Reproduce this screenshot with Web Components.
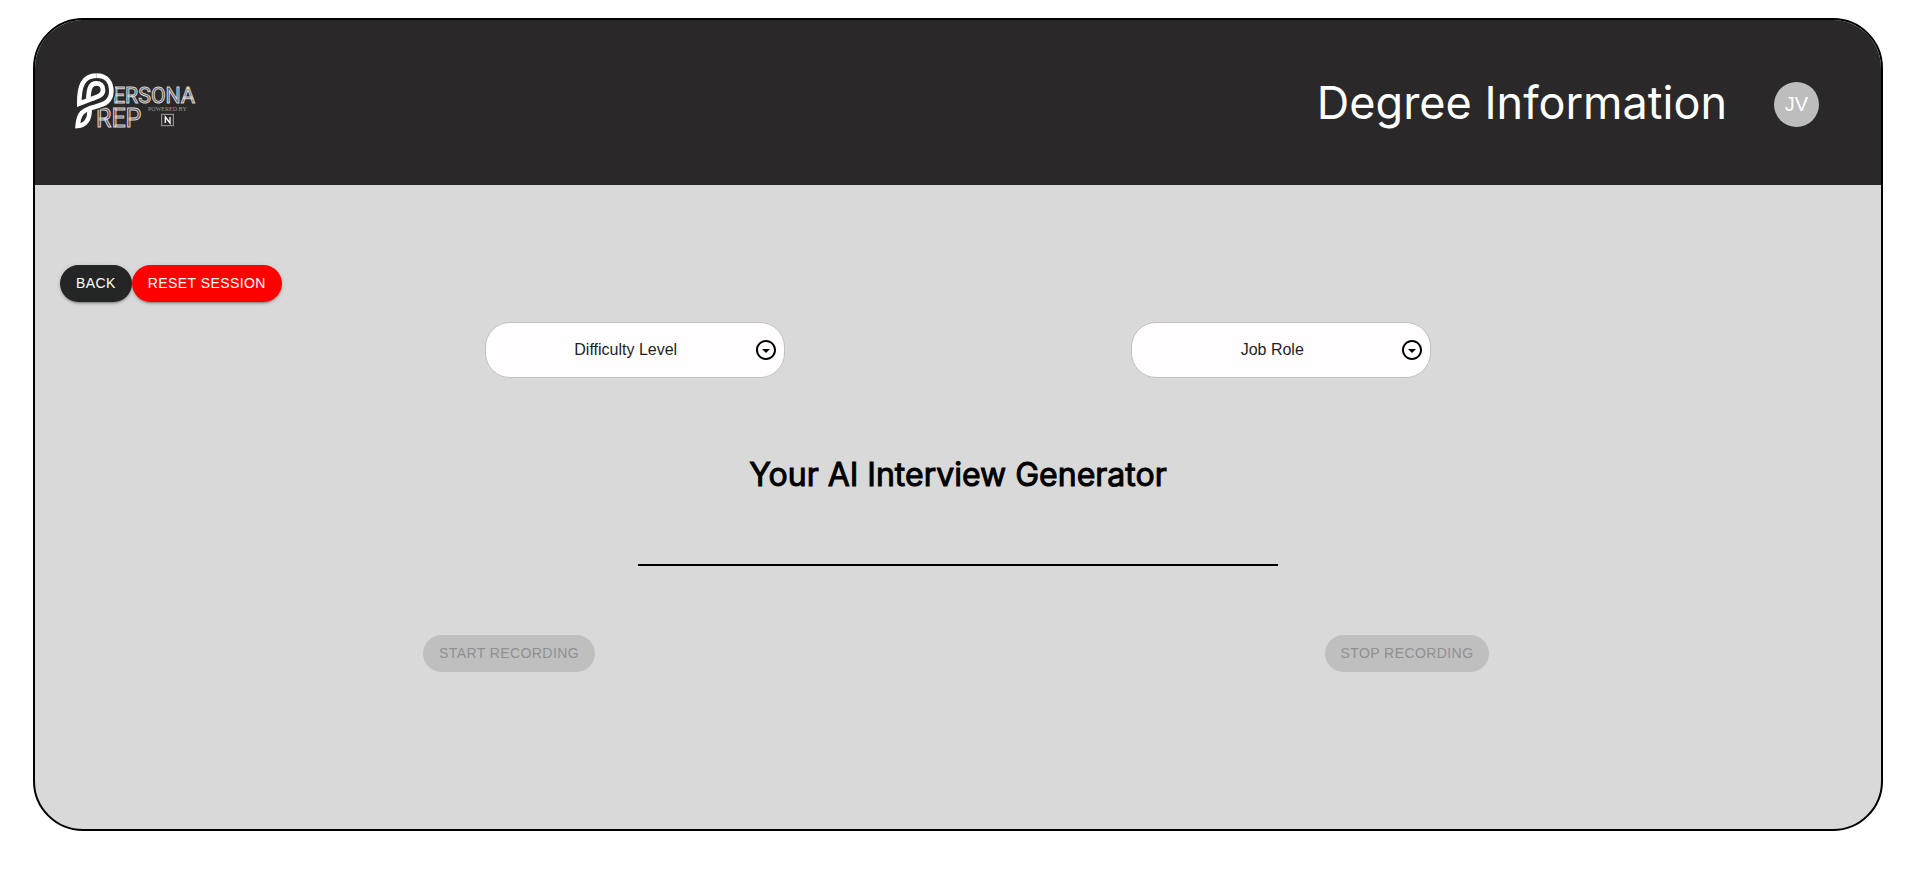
<!DOCTYPE html>
<html lang="en">
<head>
<meta charset="utf-8">
<title>Persona Prep</title>
<style>
  body { margin: 0; background: #fff; font-family: "Liberation Sans", Arial, sans-serif; }
</style>
</head>
<body>
<app-shell>
  <app-header slot="header" heading="Degree Information" initials="JV"></app-header>
  <interview-panel></interview-panel>
</app-shell>

<script>
class BaseElement extends HTMLElement {
  render(html) {
    if (!this.shadowRoot) this.attachShadow({ mode: "open" });
    this.shadowRoot.innerHTML = html;
  }
}

customElements.define("brand-logo", class extends BaseElement {
  connectedCallback() {
    this.render(`
      <style>
        :host { display: block; }
        svg { display: block; width: 128px; height: 66px; overflow: visible; }
        .word { font-family: Roboto, sans-serif; fill: #4a4949; stroke: #d4d4d4; stroke-width: 3; }
        .small { font-family: "Liberation Serif", serif; fill: #999; }
      </style>
      <svg viewBox="0 0 384 198" role="img" aria-label="Persona Prep">
        <text class="word" x="123" y="98" font-size="64">ERSONA</text>
        <text class="word" x="72" y="170" font-size="75">REP</text>
        <g fill="none" stroke="#2a2829" stroke-width="22">
          <path d="M74 16C106 16 119 40 119 64C119 94 98 103 70 110"/>
        </g>
        <g fill="none" stroke="#fff" stroke-width="14" stroke-linejoin="miter">
          <path d="M74 17C106 17 118 40 118 64C118 94 98 103 70 110C32 119 20 130 17 168C42 166 53 146 53 119"/>
          <path d="M74 17C32 17 21 50 22 101L61 86C82 79 93 74 93 60C93 47 85 40 73 40C58 40 50 50 49 88"/>
        </g>
        <text class="small" x="228" y="124" font-size="18">POWERED BY</text>
        <rect x="269" y="133" width="35" height="34" fill="none" stroke="#a5a5a5" stroke-width="3"/>
        <path d="M280 159V141L294 159V141" fill="none" stroke="#fff" stroke-width="4"/>
      </svg>`);
  }
});

customElements.define("user-avatar", class extends BaseElement {
  connectedCallback() {
    this.render(`
      <style>
        :host { display: flex; align-items: center; justify-content: center; width: 45px; height: 45px;
          border-radius: 50%; background: #bdbdbd; color: #fff; font-size: 20px; line-height: 20px; }
      </style>
      <slot></slot>`);
  }
});

customElements.define("app-header", class extends BaseElement {
  connectedCallback() {
    this.render(`
      <style>
        :host { display: block; }
        header { display: flex; align-items: center; justify-content: space-between; height: 165px;
          box-sizing: border-box; padding: 0 62px 0 37px; background: #2a2829; color: #fff; }
        .user { display: flex; align-items: flex-end; gap: 47px; }
        h1 { margin: 0; font: 400 45px/48px Inter, sans-serif; }
      </style>
      <header>
        <brand-logo></brand-logo>
        <div class="user"><h1>${this.getAttribute("heading")}</h1><user-avatar>${this.getAttribute("initials")}</user-avatar></div>
      </header>`);
  }
});

customElements.define("pill-button", class extends BaseElement {
  connectedCallback() {
    this.render(`
      <style>
        :host { display: inline-flex; }
        button { border: 0; border-radius: 20px; padding: 6px 16px; font: 400 14px/25px "Liberation Sans", Arial, sans-serif;
          letter-spacing: 0.03em; text-transform: uppercase; color: #fff; background: #242625; cursor: pointer;
          box-shadow: 0 3px 1px -2px rgba(0,0,0,.2), 0 2px 2px rgba(0,0,0,.14), 0 1px 5px rgba(0,0,0,.12); }
        :host([tone="danger"]) button { background: #f00; }
        button:disabled { background: #bfbfbf; color: #909090; box-shadow: none; cursor: default; }
      </style>
      <button type="button" ${this.hasAttribute("disabled") ? "disabled" : ""}><slot></slot></button>`);
  }
});

customElements.define("pill-select", class extends BaseElement {
  connectedCallback() {
    const label = this.getAttribute("label");
    this.render(`
      <style>
        :host { display: block; width: 300px; position: relative; }
        select { display: block; appearance: none; width: 100%; height: 56px; box-sizing: border-box; margin: 0;
          padding: 0 32px 0 14px; border: 1px solid #c2c0c1; border-radius: 25px; background: #fffdfe; color: #1f1f1f;
          font: 400 16px/24px "Liberation Sans", Arial, sans-serif; text-align: center; text-align-last: center; }
        svg { position: absolute; right: 7px; top: 16px; width: 24px; height: 24px; pointer-events: none; }
      </style>
      <select aria-label="${label}"><option>${label}</option></select>
      <svg viewBox="0 0 24 24" aria-hidden="true"><path d="M12 4c4.410 0 8 3.590 8 8s-3.590 8-8 8-8-3.590-8-8 3.590-8 8-8m0-2C6.480 2 2 6.480 2 12s4.480 10 10 10 10-4.480 10-10S17.520 2 12 2m0 13-4-4h8z"/></svg>`);
  }
});

customElements.define("interview-panel", class extends BaseElement {
  connectedCallback() {
    this.render(`
      <style>
        :host { display: block; padding: 80px 25px; }
        .actions { display: flex; }
        .filters { display: flex; justify-content: space-around; width: 72%; margin: 20px auto 0; }
        h2 { margin: 77px 0 69px; text-align: center; color: #000; font: 400 32px/40px Inter, sans-serif;
          -webkit-text-stroke: 1px #000; }
        hr { width: 640px; max-width: 100%; height: 2px; margin: 0 auto 69px; border: 0; background: #000; }
        .recording { display: grid; grid-template-columns: 1fr 1fr; justify-items: center; }
      </style>
      <div class="actions"><pill-button>Back</pill-button><pill-button tone="danger">Reset Session</pill-button></div>
      <div class="filters"><pill-select label="Difficulty Level"></pill-select><pill-select label="Job Role"></pill-select></div>
      <h2>Your AI Interview Generator</h2>
      <hr>
      <div class="recording"><pill-button disabled>Start Recording</pill-button><pill-button disabled>Stop Recording</pill-button></div>`);
  }
});

customElements.define("app-shell", class extends BaseElement {
  connectedCallback() {
    this.render(`
      <style>
        :host { display: block; padding: 18px 34px 51px 33px; }
        main { box-sizing: border-box; min-height: calc(100vh - 69px); border: 2px solid #000; border-radius: 50px;
          background: #d9d9d9; overflow: hidden; }
      </style>
      <main><slot name="header"></slot><slot></slot></main>`);
  }
});
</script>
</body>
</html>
